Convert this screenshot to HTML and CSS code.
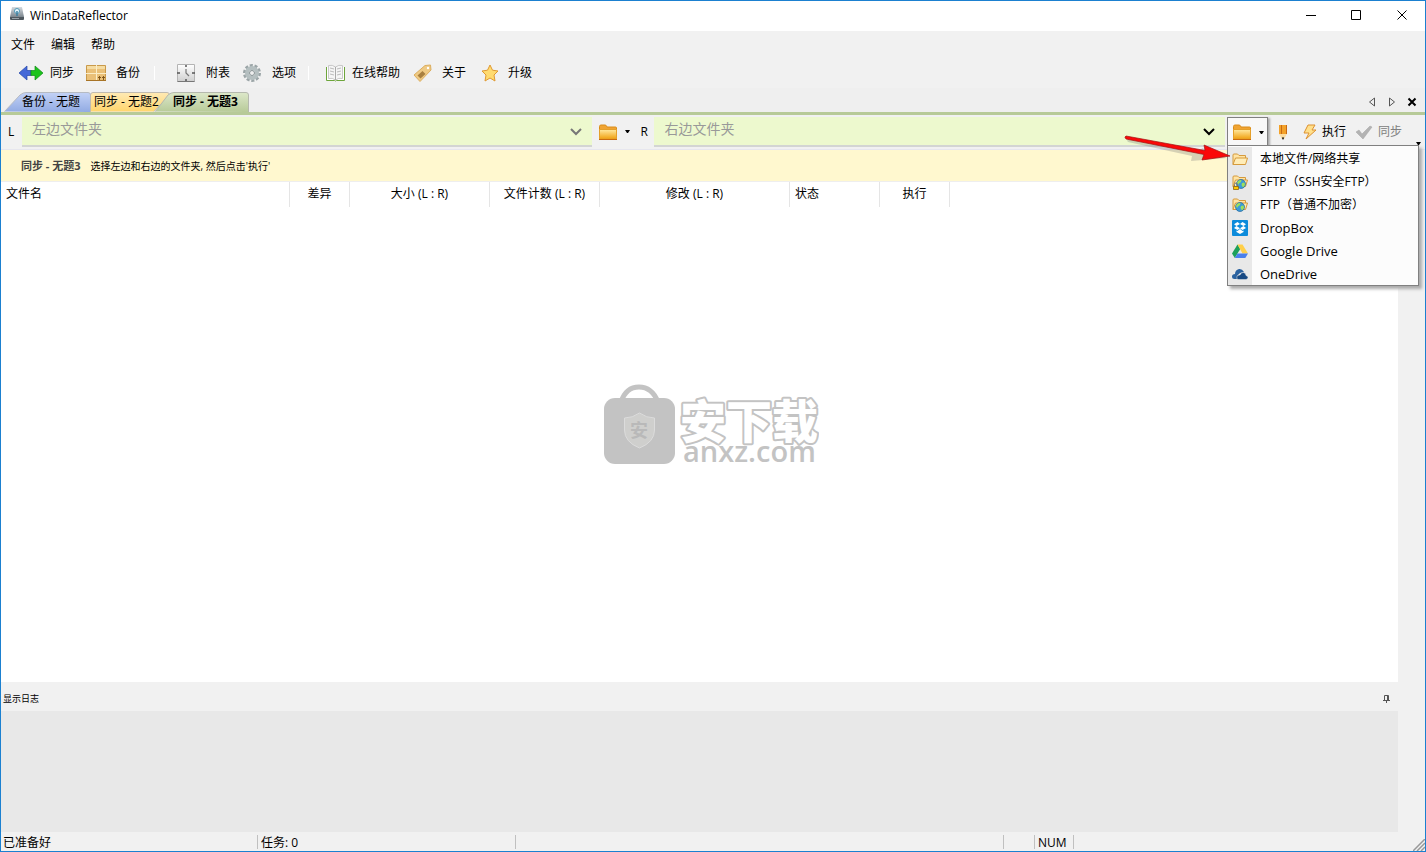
FILE: index.html
```html
<!DOCTYPE html>
<html lang="zh-CN">
<head>
<meta charset="utf-8">
<title>WinDataReflector</title>
<link rel="stylesheet" href="styles.css">
</head>
<body>
<svg class="defs" width="0" height="0" aria-hidden="true">
  <defs>
    <linearGradient id="gold" x1="0" y1="0" x2="0" y2="1"><stop offset="0" stop-color="#ffe9a0"/><stop offset="1" stop-color="#f0a010"/></linearGradient>
    <linearGradient id="tabBlue" x1="0" y1="0" x2="0" y2="1"><stop offset="0" stop-color="#c3d2f6"/><stop offset="1" stop-color="#92abe3"/></linearGradient>
    <linearGradient id="tabGold" x1="0" y1="0" x2="0" y2="1"><stop offset="0" stop-color="#ffeab5"/><stop offset="1" stop-color="#ffd56d"/></linearGradient>
    <linearGradient id="tabGreen" x1="0" y1="0" x2="0" y2="1"><stop offset="0" stop-color="#dde8ca"/><stop offset="1" stop-color="#b7ca98"/></linearGradient>
    <linearGradient id="disk" x1="0" y1="0" x2="0" y2="1"><stop offset="0" stop-color="#d5dbe0"/><stop offset="1" stop-color="#7b858d"/></linearGradient>
    <linearGradient id="clock" x1="0" y1="0" x2="0" y2="1"><stop offset="0" stop-color="#ffffff"/><stop offset="1" stop-color="#cfcfcf"/></linearGradient>
    <symbol id="folder" viewBox="0 0 18 16">
      <path d="M0.5 13V2.5Q0.5 1 2 1h4q1 0 1.500 1l.5 1h8.500q1 0 1 1v9z" fill="#f0a432" stroke="#d98c1a"/>
      <path d="M0.500 5.500h17v9.500h-17z" fill="url(#gold)" stroke="#e5a02a"/>
      <path d="M0 15.500h18" stroke="#c96a10"/>
    </symbol>
    <symbol id="openFolder" viewBox="0 0 16 14">
      <path d="M1 12.500V3q0-1 1-1h3.500l1.500 1.500h6.500V6" fill="#ffe4a4" stroke="#d59a3c"/>
      <path d="M1 12.500L3.500 6h12L13.500 12.500z" fill="#ffedb8" stroke="#d59a3c"/>
    </symbol>
    <symbol id="globe" viewBox="0 0 10 10">
      <circle cx="5" cy="5" r="4.500" fill="#3b9ad9" stroke="#27689e" stroke-width=".7"/>
      <path d="M2 2q2-1.500 3.500-1L5 3 3 4.500 2 6 1 4zM6 4l2.500-.5L9 6 7 8.500 5.500 6z" fill="#9be05b"/>
    </symbol>
  </defs>
</svg>
<div class="window">
  <header class="titlebar">
    <svg class="app-icon" width="16" height="16" viewBox="0 0 16 16"><path d="M3 1h10l2 10H1z" fill="url(#disk)"/><path d="M1 11h14v2q0 1-1 1H2q-1 0-1-1z" fill="#4e575e"/><circle cx="8" cy="5" r="2.500" fill="#e9f6fb" stroke="#4d9ab9"/><path d="M8 5v5" stroke="#3e7f9f" stroke-width="1.500"/><path d="M3 12.500h7" stroke="#98a2a8"/></svg>
    <h1 class="title">WinDataReflector</h1>
    <button class="win-btn" aria-label="最小化"><svg width="11" height="11"><path d="M1 5.500h10" stroke="#000"/></svg></button>
    <button class="win-btn" aria-label="最大化"><svg width="11" height="11"><path d="M.5.5h9v9h-9z" fill="none" stroke="#000"/></svg></button>
    <button class="win-btn" aria-label="关闭"><svg width="11" height="11"><path d="M.5.5l9 9M9.500.5l-9 9" stroke="#000"/></svg></button>
  </header>

  <nav class="menubar"><button>文件</button><button>编辑</button><button>帮助</button></nav>

  <div class="toolbar">
    <button class="tool"><svg width="24" height="16" viewBox="0 0 24 16"><path d="M0 8l8-7v4.500h4v5H8V15z" fill="#4468d8" stroke="#2446a8" stroke-width=".7"/><path d="M24 8l-8-7v4.500h-4v5h4V15z" fill="#1cc41c" stroke="#128a18" stroke-width=".7"/></svg>同步</button>
    <button class="tool"><svg width="24" height="18" viewBox="0 0 24 18"><path d="M1.500 1.500h19v15h-19z" fill="#eac078" stroke="#c99a4a"/><path d="M2 2h18v3H2z" fill="#f5dca2"/><path d="M11.500 1v16M1 9.500h20" stroke="#fbedc6"/><path d="M1 16.500h20" stroke="#a87426"/><path d="M14.500 12v4M18.500 12v4M13 13.500h3M17 13.500h3" stroke="#80571c"/></svg>备份</button>
    <span class="sep sep-wide"></span>
    <button class="tool"><svg width="24" height="18" viewBox="0 0 24 18"><path d="M2.500.5h17v17h-17z" fill="url(#clock)" stroke="#b4b4b4"/><path d="M2.500 17.500h17" stroke="#777"/><path d="M11 1v2M11 15v2M2 9h3M17 9h3" stroke="#555" stroke-width="1.500"/><path d="M11 5v4l3 3" fill="none" stroke="#777" stroke-width="1.200"/></svg>附表</button>
    <button class="tool"><svg width="24" height="18" viewBox="0 0 24 18"><circle cx="11" cy="9" r="7.500" fill="none" stroke="#9ba5a7" stroke-width="3" stroke-dasharray="3 1.700"/><circle cx="11" cy="9" r="5" fill="none" stroke="#b5bfc0" stroke-width="4"/><circle cx="11" cy="9" r="2.500" fill="#eee" stroke="#869193"/></svg>选项</button>
    <span class="sep"></span>
    <button class="tool"><svg width="24" height="18" viewBox="0 0 24 18"><path d="M5.500 3v13.500h8l1 .5 1-.5h8V3" fill="#fff" stroke="#6da53b"/><path d="M7.500 1.500q4-1 7 1.500 3-2.500 7-1.500v13q-4-1-7 1.500-3-2.500-7-1.500z" fill="#f5f5f5" stroke="#c8c8c8"/><path d="M14.500 3v13" stroke="#aaa"/><path d="M9 4l4 1M9 7l4 1M9 10l4 1M20 4l-4 1M20 7l-4 1M20 10l-4 1" stroke="#bbb"/></svg>在线帮助</button>
    <button class="tool"><svg width="24" height="18" viewBox="0 0 24 18"><path d="M3 11L14 1.500l5.500-.5.500 5L9 17.500z" fill="#efca84" stroke="#dcae60"/><path d="M6.500 11.500l5-4.500 3 3-5 4.500z" fill="#a98040"/><circle cx="17" cy="4" r="1.200" fill="#fff"/></svg>关于</button>
    <button class="tool"><svg width="24" height="18" viewBox="0 0 24 18"><path d="M13 1l2.500 5.200 5.500.8-4 4 1 6-5-3-5 3 1-6-4-4 5.500-.8z" fill="#ffdb70" stroke="#e09a33"/></svg>升级</button>
  </div>

  <div class="tabstrip">
    <div class="tabs">
      <button class="tab tab-a"><svg class="tab-shape" width="87" height="20" viewBox="0 0 87 20"><path d="M.5 19.500L16 3q3-2.500 6-2.500h62q2.500 0 2.500 2.500v17" fill="url(#tabBlue)" stroke="#b5bac2"/></svg><span>备份 - 无题</span></button>
      <button class="tab tab-b"><svg class="tab-shape" width="80" height="20" viewBox="0 0 80 20"><path d="M.5 19.500V3Q.5.5 3 .5h74q2.500 0 2.500 2.500L64 19.500" fill="url(#tabGold)" stroke="#bfbab0"/></svg><span>同步 - 无题2</span></button>
      <button class="tab tab-c"><svg class="tab-shape" width="94" height="20" viewBox="0 0 94 20"><path d="M.5 19.500L13 3q3-2.500 6-2.500h72q2.500 0 2.500 2.500v17" fill="url(#tabGreen)" stroke="#b5b9ae"/></svg><span>同步 - 无题3</span></button>
    </div>
    <button class="strip-btn" aria-label="上一个"><svg width="10" height="10"><path d="M7.500 1v8l-5-4z" fill="none" stroke="#555"/></svg></button>
    <button class="strip-btn" aria-label="下一个"><svg width="10" height="10"><path d="M2.500 1v8l5-4z" fill="none" stroke="#555"/></svg></button>
    <button class="strip-btn" aria-label="关闭标签"><svg width="10" height="10"><path d="M1.500 1.500l7 7M8.500 1.500l-7 7" stroke="#000" stroke-width="2"/></svg></button>
  </div>

  <div class="pathbar">
    <label class="side" for="left">L</label>
    <div class="field"><input id="left" type="text" placeholder="左边文件夹"><button aria-label="展开左边"><svg width="12" height="8"><path d="M1 1l5 5 5-5" fill="none" stroke="#777" stroke-width="2"/></svg></button></div>
    <button class="folder-btn" aria-label="选择左边文件夹"><svg width="18" height="16"><use href="#folder"/></svg><svg width="5" height="3"><path d="M0 0h5L3 3H2z"/></svg></button>
    <label class="side side-r" for="right">R</label>
    <div class="field"><input id="right" type="text" placeholder="右边文件夹"><button aria-label="展开右边"><svg width="12" height="8"><path d="M1 1l5 5 5-5" fill="none" stroke="#000" stroke-width="2"/></svg></button></div>
    <div class="dropdown">
      <button class="folder-btn open" aria-label="选择右边文件夹" aria-expanded="true"><svg width="18" height="16"><use href="#folder"/></svg><svg width="5" height="3"><path d="M0 0h5L3 3H2z"/></svg></button>
      <div class="popup" role="menu">
        <button role="menuitem"><span class="cell"><svg width="16" height="14"><use href="#openFolder"/></svg></span>本地文件/网络共享</button>
        <button role="menuitem"><span class="cell"><svg width="16" height="16" viewBox="0 0 16 16"><use href="#openFolder" width="16" height="14"/><use href="#globe" x="4" y="5" width="10" height="10"/><path d="M2.500 12v-1.500q0-1.500 1.500-1.500t1.500 1.500V12" fill="none" stroke="#777"/><path d="M1.500 12.500h5v3h-5z" fill="#ffc800" stroke="#8a6510" stroke-width=".8"/></svg></span>SFTP（SSH安全FTP）</button>
        <button role="menuitem"><span class="cell"><svg width="16" height="16" viewBox="0 0 16 16"><use href="#openFolder" width="16" height="14"/><use href="#globe" x="3" y="5" width="10" height="10"/></svg></span>FTP（普通不加密）</button>
        <button role="menuitem" class="latin"><span class="cell"><svg width="16" height="16" viewBox="0 0 16 16"><rect width="16" height="16" rx="1" fill="#0c8bdb"/><path d="M5.500 2L8 4l-3.500 2L2 4.200zM10.500 2L8 4l3.500 2L14 4.200zM2 8l2.500-2L8 8.200 5.500 10zM14 8l-2.500-2L8 8.200l2.500 1.800zM4.500 10.500l1 .5L8 9l2.500 2 1-.5V12L8 14l-3.500-2z" fill="#fff"/></svg></span>DropBox</button>
        <button role="menuitem" class="latin"><span class="cell"><svg width="16" height="14" viewBox="0 0 16 14"><path d="M5.500.5L0 9.500 2.800 14 8.200 5z" fill="#1da05a"/><path d="M5.500.5h5L16 9.500h-5.500z" fill="#ffcf48"/><path d="M5.500 9.500H16L13.300 14H2.800z" fill="#4a80ed"/></svg></span>Google Drive</button>
        <button role="menuitem" class="latin"><span class="cell"><svg width="16" height="12" viewBox="0 0 16 12"><path d="M2.500 11Q0 11 0 8.500T3 6q0-4 4-5 3-.5 5 3l-4 1-3 3v3z" fill="#2a62a0"/><path d="M6 11.500q-2-1-1-3t3-1.500q1-3 3.500-2.500T14 7.500q2 .5 2 2t-2 2z" fill="#174a84" stroke="#e8e8e8" stroke-width=".5"/></svg></span>OneDrive</button>
      </div>
      <svg class="arrow" width="108" height="32" viewBox="0 0 108 32"><path d="M3 5l64 14-1 5 36-3-25-10-2 4L4 2q-3 1-1 3z" transform="translate(1 2)" fill="#777" opacity=".3"/><path d="M2 1L81 15.500l-1-5.500 26 11-28 4 2-5.500L2 4Q0 2 2 1z" fill="#fa0808" stroke="#9f1212" stroke-width=".7"/></svg>
    </div>
    <div class="actions">
      <button aria-label="编辑"><svg width="10" height="16" viewBox="0 0 10 16"><path d="M1 1h8v9H1z" fill="#f3a22a"/><path d="M3.500 1v9M8.500 1v9" stroke="#c86a14"/><path d="M1 10h8l-3 5H4z" fill="#fbdca0"/><path d="M3.800 13.500h2.400L5 16z"/></svg></button>
      <button><svg width="14" height="16" viewBox="0 0 14 16"><path d="M5 1h7L9 6h4L3 15l3-6H1z" fill="#ffe08c" stroke="#dd9130"/></svg>执行</button>
      <button disabled><svg width="18" height="14" viewBox="0 0 18 14"><path d="M1 7l3-2 3 4 8-8 2 1-9 12z" fill="#b3b3b3" stroke="#a5a5a5" stroke-width=".5"/></svg>同步</button>
    </div>
    <button class="more" aria-label="更多"><svg width="5" height="3"><path d="M0 0h5L3 3H2z"/></svg></button>
  </div>

  <main class="work">
    <div class="notice"><strong>同步 - 无题3</strong><span>选择左边和右边的文件夹, 然后点击'执行'</span></div>
    <div class="files">
      <table>
        <colgroup><col class="c-name"><col class="c-diff"><col class="c-size"><col class="c-count"><col class="c-mod"><col class="c-state"><col class="c-run"><col></colgroup>
        <thead><tr><th class="start">文件名</th><th>差异</th><th>大小 (L : R)</th><th>文件计数 (L : R)</th><th>修改 (L : R)</th><th class="start">状态</th><th>执行</th><th></th></tr></thead>
      </table>
      <div class="mark">
        <svg width="71" height="80" viewBox="0 0 71 80"><path d="M17 18q5-15 18-15t19 15" fill="none" stroke="#c3c3c3" stroke-width="5"/><rect y="14" width="71" height="66" rx="11" fill="#c3c3c3"/><path d="M35.500 29q7 5 15 5v12q0 12-15 18-15-6-15-18V34q8 0 15-5z" fill="#cfcfcd" stroke="#dcdcdc"/><text x="35" y="53" class="mark-seal">安</text></svg>
        <svg width="140" height="84" viewBox="0 0 140 84"><text x="1" y="54" class="mark-cn">安下载</text><text x="4" y="78" class="mark-url">anxz.com</text></svg>
      </div>
    </div>
    <section class="log">
      <div class="log-head"><h2>显示日志</h2><button aria-label="固定"><svg width="7" height="8"><path d="M1.500 5V.5h4V5M0 5.500h7M3.500 5v3" fill="none" stroke="#555"/><path d="M4.500 0v5" stroke="#555"/></svg></button></div>
      <div class="log-body"></div>
    </section>
  </main>

  <footer class="status">
    <span class="s-ready">已准备好</span><span class="s-tasks">任务: 0</span><span class="s-fill"></span><span class="s-blank"></span><span class="s-num">NUM</span>
    <svg class="grip" width="12" height="12"><path d="M0 12L12 0M4 12l8-8M8 12l4-4" stroke="#999" stroke-width="1.500"/></svg>
  </footer>
</div>
</body>
</html>
```
FILE: styles.css
```css
* { box-sizing: border-box; }
body { margin: 0; color: #000; font: 12px/16px "Open Sans", "Noto Sans CJK SC", sans-serif; }
button { display: flex; align-items: center; margin: 0; padding: 0; border: 0; background: none; color: inherit; font: inherit; white-space: nowrap; }
svg { display: block; flex: none; }
h1, h2 { margin: 0; font-size: inherit; font-weight: 400; }
.defs { position: absolute; }

.window { display: flex; flex-direction: column; min-height: 100vh; border: 1px solid #1b80d0; background: #f1f1f1; }

.titlebar { display: flex; height: 30px; background: #fff; }
.app-icon { margin: 5px 5px 0 8px; }
.title { flex: 1; line-height: 30px; }
.win-btn { justify-content: center; width: 46px; padding-bottom: 1px; }

.menubar { display: flex; gap: 16px; height: 26px; padding: 1px 0 0 10px; }
.toolbar { display: flex; align-items: center; gap: 12px; height: 31px; padding-left: 18px; }
.tool { gap: 7px; }
.tool + .tool { margin-left: -1px; }
.sep { width: 1px; height: 14px; border-left: 1px solid #fff; }
.sep-wide { margin: 0 8px 0 2px; }

.tabstrip { display: flex; align-items: flex-end; height: 27px; padding-right: 3px; border-bottom: 3px solid #b7ca98; background: #efefef; }
.tabs { display: flex; flex: 1; padding-left: 3px; }
.tab { position: relative; height: 20px; }
.tab-shape { position: absolute; inset: 0; }
.tab span { position: relative; line-height: 18px; }
.tab-a { width: 87px; padding-left: 18px; }
.tab-b { width: 80px; padding-left: 4px; margin-left: -1px; }
.tab-c { width: 94px; padding-left: 18px; margin-left: -15px; font-weight: 700; }
.strip-btn { justify-content: center; width: 20px; height: 20px; }

.pathbar { display: flex; height: 35px; padding: 2px 0 0 1px; border-bottom: 1px solid #e6e6ee; }
.side { width: 20px; padding-left: 6px; line-height: 30px; }
.side-r { width: 19px; padding-left: 5px; }
.field { display: flex; flex: 1; height: 30px; border-bottom: 2px solid #d3d5d3; background: #edf9ce; }
.field input { flex: 1; min-width: 0; padding: 0 10px 4px; border: 0; background: none; font: 14px/20px "Open Sans", "Noto Sans CJK SC", sans-serif; }
.field input::placeholder { color: #999; opacity: 1; }
.field button { width: 22px; padding-top: 2px; }
.folder-btn { gap: 8px; width: 43px; height: 29px; padding-left: 7px; }
.dropdown { position: relative; margin-left: 2px; }
.folder-btn.open { width: 41px; padding-left: 5px; border: 1px solid #808080; border-bottom: 0; background: #f8f8f8; box-shadow: 2px 1px 2px #aaa; }
.popup { position: absolute; top: 28px; left: 0; z-index: 2; width: 192px; height: 141px; padding: 1px 0 1px; border: 1px solid #808080; background: #fcfcfc; box-shadow: 3px 3px 3px #aaa; }
.popup button { gap: 8px; width: 100%; height: 23px; }
.popup .latin { font-size: 13px; }
.cell { display: flex; align-items: center; justify-content: center; width: 24px; height: 23px; background: #e8e8e8; }
.arrow { position: absolute; top: 18px; left: -103px; z-index: 3; }
.actions { display: flex; gap: 10px; height: 30px; padding-left: 10px; }
.actions button { gap: 5px; }
.actions button + button { margin-left: 5px; }
.actions button:disabled { margin-left: -1px; color: #808080; }
.more { align-items: flex-end; width: 23px; height: 28px; padding-left: 14px; }

.work { display: flex; flex: 1; flex-direction: column; margin-right: 27px; }
.notice { display: flex; gap: 10px; height: 32px; padding: 8px 20px 0; border-bottom: 1px solid #eee; background: #fff8cf; font-size: 10px; }
.notice strong { color: #444; font-size: 11px; }
.files { display: flex; flex: 1; flex-direction: column; background: #fff; }
table { width: 100%; border-collapse: separate; border-spacing: 0; table-layout: fixed; }
th { height: 25px; padding: 0 0 1px; border-right: 1px solid #e5e5e5; font-weight: 400; }
th:last-child { border-right: 0; }
.start { padding-left: 5px; text-align: left; }
.c-name { width: 289px; }
.c-diff { width: 60px; }
.c-size { width: 140px; }
.c-count { width: 110px; }
.c-mod { width: 190px; }
.c-state { width: 90px; }
.c-run { width: 70px; }

.mark { display: flex; align-self: center; gap: 4px; margin-top: 177px; padding-left: 24px; }
.mark-cn { fill: #fff; stroke: #c3c3c3; stroke-width: 4px; stroke-linejoin: round; paint-order: stroke; font: 900 46px "Noto Sans CJK SC", sans-serif; }
.mark-url { fill: #c3c3c3; font: 600 29px "Open Sans", sans-serif; }
.mark-seal { fill: #b9b9b9; font: 700 18px "Noto Sans CJK SC", sans-serif; text-anchor: middle; }

.log-head { display: flex; align-items: center; justify-content: space-between; height: 29px; padding: 4px 8px 0 2px; font-size: 9px; }
.log-body { height: 121px; background: #e8e8e8; }

.status { display: flex; align-items: center; height: 19px; }
.status span { height: 14px; padding-left: 2px; border-right: 1px solid #c0c0c0; line-height: 16px; }
.s-ready { width: 257px; }
.s-tasks { width: 258px; }
.status .s-tasks, .status .s-num { padding-left: 3px; }
.s-fill { flex: 1; }
.s-blank { width: 31px; }
.s-num { width: 39px; }
.grip { align-self: flex-end; margin-left: 339px; }
```
